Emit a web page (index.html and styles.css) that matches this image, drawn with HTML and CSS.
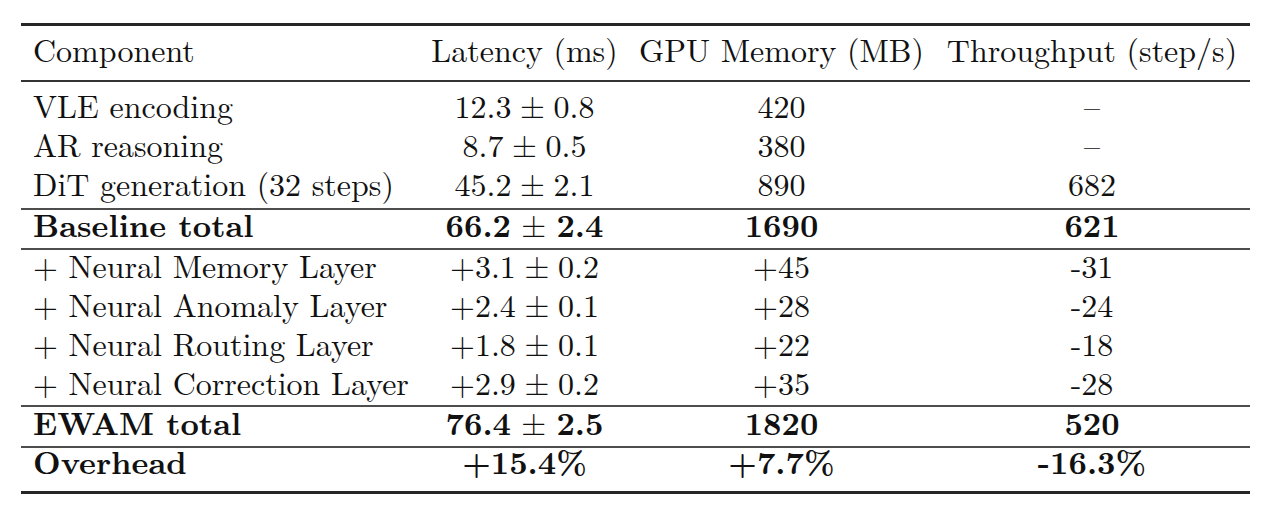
FILE: index.html
```html
<!DOCTYPE html>
<html lang="en">
<head>
<meta charset="utf-8">
<title>Component overhead</title>
<link rel="stylesheet" href="styles.css">
</head>
<body>
<div class="page">
  <table class="tbl">
    <colgroup>
      <col class="c1"><col class="c2"><col class="c3"><col class="c4">
    </colgroup>
    <thead>
      <tr>
        <th class="l">Component</th>
        <th>Latency (ms)</th>
        <th>GPU Memory (MB)</th>
        <th>Throughput (step/s)</th>
      </tr>
    </thead>
    <tbody class="grp g1">
      <tr class="first"><td class="l">VLE encoding</td><td>12.3 <span class="pm">±</span> 0.8</td><td>420</td><td>–</td></tr>
      <tr><td class="l">AR reasoning</td><td>8.7 <span class="pm">±</span> 0.5</td><td>380</td><td>–</td></tr>
      <tr class="last"><td class="l">DiT generation (32 steps)</td><td>45.2 <span class="pm">±</span> 2.1</td><td>890</td><td>682</td></tr>
    </tbody>
    <tbody class="grp total base">
      <tr><td class="l">Baseline total</td><td>66.2 <span class="pm">±</span> 2.4</td><td>1690</td><td>621</td></tr>
    </tbody>
    <tbody class="grp g2">
      <tr><td class="l">+ Neural Memory Layer</td><td>+3.1 <span class="pm">±</span> 0.2</td><td>+45</td><td>-31</td></tr>
      <tr><td class="l">+ Neural Anomaly Layer</td><td>+2.4 <span class="pm">±</span> 0.1</td><td>+28</td><td>-24</td></tr>
      <tr><td class="l">+ Neural Routing Layer</td><td>+1.8 <span class="pm">±</span> 0.1</td><td>+22</td><td>-18</td></tr>
      <tr class="last"><td class="l">+ Neural Correction Layer</td><td>+2.9 <span class="pm">±</span> 0.2</td><td>+35</td><td>-28</td></tr>
    </tbody>
    <tbody class="grp total ewam">
      <tr><td class="l">EWAM total</td><td>76.4 <span class="pm">±</span> 2.5</td><td>1820</td><td>520</td></tr>
    </tbody>
    <tbody class="grp total overhead">
      <tr><td class="l">Overhead</td><td>+15.4%</td><td>+7.7%</td><td>-16.3%</td></tr>
    </tbody>
  </table>
</div>
</body>
</html>
```

FILE: styles.css
```css
html, body {
  margin: 0;
  padding: 0;
  background: #ffffff;
}

.page {
  padding: 23px 0 0 21px;
}

.tbl {
  width: 1229px;
  table-layout: fixed;
  border-collapse: collapse;
  border-top: 3px solid #262626;
  border-bottom: 3px solid #262626;
  font-family: "Latin Modern Roman", "CMU Serif", "Liberation Serif", "DejaVu Serif", serif;
  font-size: 32px;
  color: #111111;
}

.c1 { width: 399px; }
.c2 { width: 209px; }
.c3 { width: 305px; }
.c4 { width: 316px; }

.tbl th,
.tbl td {
  font-family: inherit;
  line-height: 27px;
  padding: 1px 0 11px 0;
  text-align: center;
  white-space: nowrap;
  font-weight: normal;
}

.tbl .l {
  text-align: left;
  padding-left: 12px;
}

.tbl thead th {
  padding-top: 9px;
  padding-bottom: 18px;
  border-bottom: 2px solid #333333;
}

.grp + .grp {
  border-top: 2px solid #4d4d4d;
}

.g1 .first td {
  padding-top: 9px;
}

.g1 .last td {
  padding-bottom: 12px;
}

.total td {
  font-weight: bold;
}

.base td {
  padding-top: 0;
}

.g2 .last td {
  padding-bottom: 10px;
}

.overhead td {
  line-height: 25px;
  padding-top: 0;
  padding-bottom: 18px;
}

.pm {
  font-weight: normal;
  margin: 0 -2px;
}
```
